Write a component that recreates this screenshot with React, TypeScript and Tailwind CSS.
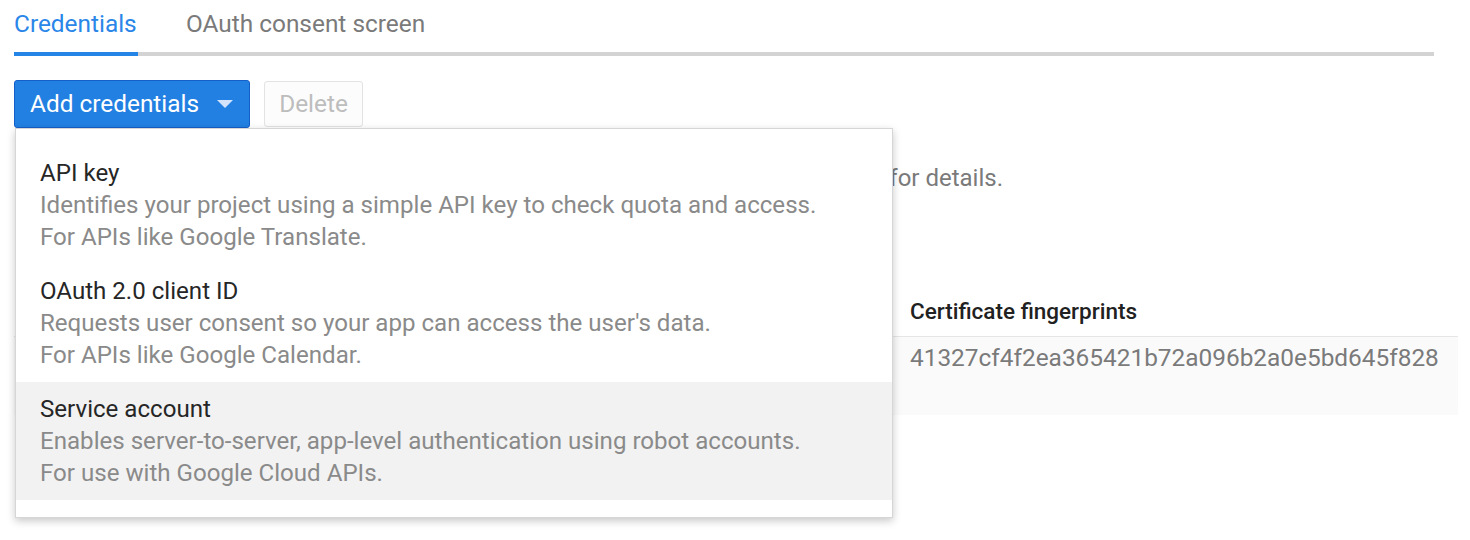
import React from 'react'

const items = [
  {
    title: 'API key',
    lines: ['Identifies your project using a simple API key to check quota and access.', 'For APIs like Google Translate.'],
  },
  {
    title: 'OAuth 2.0 client ID',
    lines: ["Requests user consent so your app can access the user's data.", 'For APIs like Google Calendar.'],
  },
  {
    title: 'Service account',
    lines: ['Enables server-to-server, app-level authentication using robot accounts.', 'For use with Google Cloud APIs.'],
    active: true,
  },
]

export default function App() {
  return (
    <div className="relative h-[540px] w-[1470px] overflow-hidden bg-white font-['Roboto',sans-serif]">
      {/* Tabs */}
      <div className="ml-[14px] w-[1420px] pt-[8px]">
        <div className="flex items-end text-[24.4px] leading-[32px]">
          <div className="w-[124px] text-[#2a86e8]">Credentials</div>
          <div className="ml-[48px] text-[#7a7a7a]">OAuth consent screen</div>
        </div>
        <div className="mt-[12px] flex h-[4px] bg-[#d3d3d3]">
          <div className="w-[124px] bg-[#2585e6]" />
        </div>
      </div>

      {/* Actions */}
      <div className="ml-[14px] mt-[24px] flex items-center gap-[14px]">
        <button className="flex h-[48px] w-[236px] items-center rounded-[3px] border border-[#1560c8] bg-[#2280e2] pl-[15px] text-[24.4px] text-white">
          <span>Add credentials</span>
          <svg width="16" height="8" viewBox="0 0 16 8" className="ml-[18px]">
            <path d="M0 0 L16 0 L8 8 Z" fill="#d2e3fb" />
          </svg>
        </button>
        <button className="h-[46px] w-[99px] rounded-[3px] border border-[#e3e3e3] bg-[#fcfcfc] text-[24.4px] text-[#bdbdbd]">
          Delete
        </button>
      </div>

      {/* Page content partly behind the menu */}
      <p className="ml-[14px] mt-[34px] w-[989px] whitespace-nowrap text-right text-[24px] leading-[32px] text-[#7a7a7a]">
        for details.
      </p>

      <div className="ml-[14px] mt-[99px] w-[1444px]">
        <div className="flex h-[44px] items-center border-b border-[#e6e6e6] pb-[6px] pl-[896px] text-[22.5px] font-medium text-[#212121]">
          Certificate fingerprints
        </div>
        <div className="h-[78px] bg-[#fafafa] pl-[896px] pt-[5px] text-[24.4px] leading-[32px] text-[#7a7a7a]">
          41327cf4f2ea365421b72a096b2a0e5bd645f828
        </div>
      </div>

      {/* Dropdown menu */}
      <div className="absolute left-[15px] top-[128px] w-[878px] border border-[#d6d6d6] bg-white py-[17px] shadow-[0_3px_8px_rgba(0,0,0,0.22)]">
        {items.map((item) => (
          <div
            key={item.title}
            className={`py-[11px] pl-[24px] text-[24.1px] leading-[32px] ${item.active ? 'bg-[#f2f2f2]' : ''}`}
          >
            <div className="text-[#262626]">{item.title}</div>
            {item.lines.map((line) => (
              <div key={line} className="text-[#8a8a8a]">
                {line}
              </div>
            ))}
          </div>
        ))}
      </div>
    </div>
  )
}
